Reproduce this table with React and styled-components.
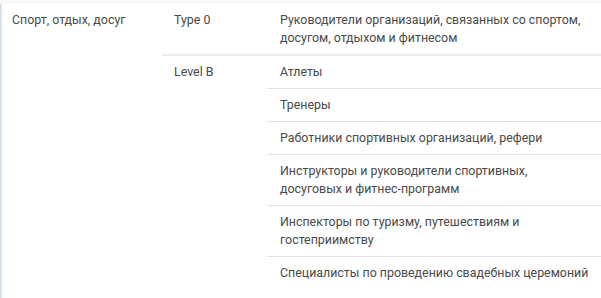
import React from "react";
import styled, { createGlobalStyle } from "styled-components";

const GlobalStyle = createGlobalStyle`
  body {
    margin: 0;
    background: #ffffff;
    font-family: Roboto, "Noto Sans", sans-serif;
  }
`;

const groups = [
  {
    level: "Type 0",
    items: ["Руководители организаций, связанных со спортом, досугом, отдыхом и фитнесом"],
  },
  {
    level: "Level B",
    items: [
      "Атлеты",
      "Тренеры",
      "Работники спортивных организаций, рефери",
      "Инструкторы и руководители спортивных, досуговых и фитнес-программ",
      "Инспекторы по туризму, путешествиям и гостеприимству",
      "Специалисты по проведению свадебных церемоний",
    ],
  },
];

export default function App() {
  return (
    <>
      <GlobalStyle />
      <TopBand />
      <Table>
        <Category>Спорт, отдых, досуг</Category>
        <Groups>
          {groups.map((g) => (
            <Group key={g.level}>
              <Level>{g.level}</Level>
              <Items>
                {g.items.map((item) => (
                  <Item key={item}>{item}</Item>
                ))}
              </Items>
            </Group>
          ))}
        </Groups>
      </Table>
    </>
  );
}

const TopBand = styled.div`
  height: 4px;
  background: #f6f7f8;
`;

const Table = styled.div`
  display: flex;
  border-left: 2px solid #d3e2ec;
  border-bottom: 1px solid #ececec;
  padding-bottom: 10px;
  font-size: 12.4px;
  line-height: 18px;
  color: #4a4a4a;
`;

const Category = styled.div`
  width: 150px;
  padding: 7px 0 0 10px;
`;

const Groups = styled.div`
  flex: 1;
  display: flex;
  flex-direction: column;
`;

const Group = styled.div`
  display: flex;
  & + & {
    border-top: 2px solid #eceeef;
  }
`;

const Level = styled.div`
  width: 93px;
  padding: 7px 0 0 12px;
`;

const Items = styled.div`
  flex: 1;
  display: flex;
  flex-direction: column;
`;

const Item = styled.div`
  padding: 7px 12px 7px 13px;
  & + & {
    border-top: 1px solid #e4e4e4;
  }
`;
